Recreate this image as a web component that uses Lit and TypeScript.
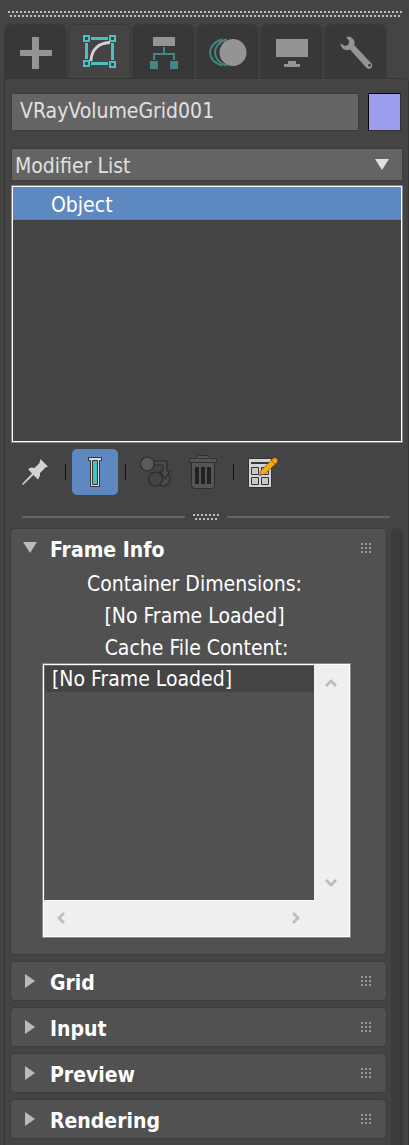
import { LitElement, html, css, svg } from "lit";
import { customElement, state } from "lit/decorators.js";
import { classMap } from "lit/directives/class-map.js";

const tabs = [
  {
    name: "Create",
    icon: svg`<path fill="#949494" d="M17 8h7v13h13v6H24v13h-7V27H5v-6h12z"/>`,
  },
  {
    name: "Modify",
    icon: svg`<path fill="#49c0c1" fill-rule="evenodd" d="M4 6h7v7H4zm2 2v3h3V8zM30 6h7v7h-7zm2 2v3h3V8zM4 31h7v7H4zm2 2v3h3v-3zM30 32h7v7h-7zm2 2v3h3v-3z
      M12 8h17v3H12zM12 33h17v3H12zM6 14h3v16H6zM32 14h3v17h-3z"/>
      <path fill="none" stroke="#d4d4d4" stroke-width="2.800" d="M12 32C12.500 21 19 14 31 13.500"/>`,
  },
  {
    name: "Hierarchy",
    icon: svg`<path fill="#949494" d="M10 8h22v9H10z"/><path fill="none" stroke="#438887" stroke-width="2" d="M21 18v7M11 31v-6h20v6"/>
      <path fill="#438887" d="M7 32h8v8H7zM27 32h8v8h-8z"/>`,
  },
  {
    name: "Motion",
    icon: svg`<g fill="none" stroke="#438887" stroke-width="1.800"><path d="M15.500 10.500C-1 14-1 33 15.500 36.500"/><path d="M20 10.500C4 14 4 33 20 36.500"/></g>
      <circle cx="26" cy="23.500" r="13.500" fill="#949494"/>`,
  },
  {
    name: "Display",
    icon: svg`<path fill="#949494" d="M5 10h32v18H5zM17 32h8v3h4v3H13v-3h4z"/>`,
  },
  {
    name: "Utilities",
    icon: svg`<path fill="#949494" fill-rule="evenodd" d="M11 8c4-1 8 1 8.500 5 .2 1 0 2-.3 3L35.500 33.500c1.500 1 2.200 2.500 1.500 4.300-1 2.500-4 2.800-5.700 1L15 20.500c-4 2-8.500-.5-9.500-5l.2-1 4 2.500 3.500-1 1-4zM34.500 34.800a1.400 1.400 0 1 0 .1 2.800 1.400 1.400 0 0 0-.1-2.800z"/>`,
  },
];

@customElement("app-root")
export class AppRoot extends LitElement {
  @state() private tab = 1;
  @state() private open: Record<string, boolean> = { "Frame Info": true };

  static styles = css`
    :host {
      display: flex;
      flex-direction: column;
      min-height: 100vh;
      box-sizing: border-box;
      padding: 11px 0 0 4px;
      background: #444;
      color: #fff;
      font: 21px/26px "DejaVu Sans Condensed", "DejaVu Sans", sans-serif;
    }
    * { box-sizing: border-box; }
    button, input, select {
      margin: 0;
      padding: 0;
      border: 0;
      background: none;
      color: inherit;
      font: inherit;
      border-radius: 0;
      appearance: none;
    }
    ul { list-style: none; margin: 0; padding: 0; }
    p, h2 { margin: 0; font: inherit; }
    svg { display: block; }
    .grip { width: calc(100% - 11px); height: 6px; margin-left: 4px; }
    .tabs { display: flex; gap: 1px; margin: 7px 22px -1px 0; }
    .tab {
      flex: 1;
      height: 55px;
      border: 1px solid #3c3c3c;
      border-bottom-color: #353535;
      border-radius: 7px 7px 0 0;
      background: #383838;
      display: flex;
      justify-content: center;
      padding-top: 4px;
    }
    .tab.active { background: #444; border-color: #383838; border-bottom-color: #444; }
    .panel {
      flex: 1;
      display: flex;
      flex-direction: column;
      border: 1px solid #363636;
      border-bottom: 0;
      border-radius: 0 5px 0 0;
      padding-top: 14px;
    }
    .top { display: flex; flex-direction: column; padding: 0 5px 0 6px; }
    .row { display: flex; gap: 9px; padding-right: 2px; }
    .name {
      flex: 1;
      min-width: 0;
      height: 38px;
      padding: 0 8px 2px;
      border: 1px solid #3b3b3b;
      background: #646464;
      color: #e0e0e0;
    }
    .swatch {
      width: 33px;
      height: 38px;
      border: 1px solid #333;
      border-top-color: #000;
      border-left-color: #000;
      background: #9d9df0;
    }
    .combo { display: grid; margin-top: 17px; }
    .combo > * { grid-area: 1 / 1; }
    .modifiers {
      height: 33px;
      padding: 2px 3px 0;
      border: 1px solid #3b3b3b;
      background: #646464;
      color: #e0e0e0;
    }
    .arrow { place-self: center end; margin-right: 14px; pointer-events: none; }
    .stack {
      height: 258px;
      margin-top: 4px;
      border: 1px solid #858590;
      outline: 1px solid #fff;
      outline-offset: -2px;
      padding: 1px;
    }
    .object {
      width: 100%;
      height: 33px;
      padding: 3px 38px 0;
      border-bottom: 1px solid #777;
      background: #5e89c0;
      text-align: left;
    }
    .tools { display: flex; align-items: center; gap: 2px; margin-top: 6px; padding-left: 1px; height: 46px; }
    .tool { display: grid; place-items: center; width: 46px; height: 46px; border-radius: 5px; }
    .tool.on { background: #5e89c0; }
    .bar { width: 1px; height: 16px; margin: 0 4px 0 5px; background: #111; }
    .splitter { display: flex; align-items: center; gap: 8px; margin: 19px 13px 8px 11px; }
    .rule { flex: 1; height: 2px; background: #646464; }
    .lower { flex: 1; display: flex; gap: 4px; padding: 0 5px; }
    .rollouts { flex: 1; display: flex; flex-direction: column; gap: 6px; }
    .scroll { width: 12px; border-radius: 6px 6px 0 0; background: #3b3b3b; }
    .rollout { border: 1px solid #3c3c3c; border-radius: 5px; background: #515151; }
    .head {
      display: flex;
      align-items: center;
      width: 100%;
      height: 38px;
      padding: 0 14px 0 12px;
      text-align: left;
      font-weight: bold;
    }
    .tri { margin-right: 12px; }
    .title { flex: 1; padding-top: 4px; }
    .body { padding: 0 35px 16px 31px; text-align: center; }
    .body p { padding-top: 2px; line-height: 30px; }
    .dims { padding-right: 4px; }
    .files {
      display: grid;
      grid-template-columns: 1fr 35px;
      grid-template-rows: 236px 35px;
      border: 1px solid #8a8a8a;
      outline: 1px solid #fff;
      outline-offset: -2px;
      padding: 1px;
      background: #efefef;
    }
    .list {
      background: #515151;
      border: 1px solid #666;
      border-right: 0;
      border-bottom-color: #fff;
      text-align: left;
    }
    .file { padding: 1px 0 0 7px; line-height: 25px; background: #444; white-space: nowrap; overflow: hidden; }
    .vbar, .hbar { display: flex; justify-content: space-between; align-items: center; }
    .vbar { flex-direction: column; padding: 9px 1px 9px 0; }
    .hbar { padding: 0 9px 2px 8px; }
    .step { display: grid; place-items: center; width: 18px; height: 18px; }
  `;

  private chevron(name: string, d: string) {
    return html`<button class="step" aria-label=${name}>
      <svg width="12" height="12"><path d=${d} fill="none" stroke="#bdbdbd" stroke-width="2.800"/></svg>
    </button>`;
  }

  private dots() {
    return svg`<pattern id="d" width="4" height="8" patternUnits="userSpaceOnUse">
      <path fill="#bebebe" d="M0 0h2v2H0zM2 4h2v2H2z"/></pattern>`;
  }

  private rollout(title: string, body: unknown = "") {
    const open = !!this.open[title];
    return html`<section class="rollout">
      <h2><button class="head" aria-expanded=${open}
        @click=${() => (this.open = { ...this.open, [title]: !open })}>
        <svg class="tri" width="15" height="14"><path fill="#bbb" d=${open ? "M0 1h14L7 12z" : "M2 0v14l10-7z"}/></svg>
        <span class="title">${title}</span>
        <svg width="12" height="10"><path stroke="#999" stroke-width="2" stroke-dasharray="2 2" d="M1 1h10M1 5h10M1 9h10"/></svg>
      </button></h2>
      ${open ? body : ""}
    </section>`;
  }

  render() {
    return html`
      <svg class="grip" aria-hidden="true"><defs>${this.dots()}</defs><rect width="100%" height="6" fill="url(#d)"/></svg>
      <nav class="tabs">
        ${tabs.map((t, i) => html`<button aria-label=${t.name}
          class=${classMap({ tab: true, active: i === this.tab })}
          @click=${() => (this.tab = i)}><svg width="41" height="46">${t.icon}</svg></button>`)}
      </nav>
      <main class="panel">
        <div class="top">
          <div class="row">
            <input class="name" aria-label="Object name" value="VRayVolumeGrid001" spellcheck="false">
            <button class="swatch" aria-label="Object color"></button>
          </div>
          <div class="combo">
            <select class="modifiers" aria-label="Modifiers"><option>Modifier List</option></select>
            <svg class="arrow" width="14" height="12"><path fill="#e0e0e0" d="M0 0h14L7 11z"/></svg>
          </div>
          <ul class="stack"><li><button class="object">Object</button></li></ul>
          <div class="tools">
            <button class="tool" aria-label="Pin stack">
              <svg width="28" height="28"><path fill="#d2d2d2" d="M19.500 1l7.500 7.500-2.500 1L19 15v2.500L17 21.500l-4.500-4.500L2 27l-1-1L11 15.500 7 11l3.500-1.500 3 .5L18.500 5z"/></svg>
            </button>
            <span class="bar"></span>
            <button class="tool on" aria-label="Show end result">
              <svg width="14" height="32"><path fill="#ddd" stroke="#333" d="M.500 1.500h13v3h-2v26h-9v-26h-2z"/><path fill="#49bfc0" stroke="#333" d="M4.500 4.500h5v24h-5z"/></svg>
            </button>
            <span class="bar"></span>
            <button class="tool" aria-label="Make unique">
              <svg width="32" height="32"><g stroke="#2b2b2b" stroke-width="1.200"><circle cx="24" cy="23" r="7" fill="#4b4b4b"/><circle cx="8.500" cy="8" r="7" fill="#5b5b5b"/>
                <path fill="#4b4b4b" d="M15 5h13v10h3l-5 8-5-8h3v-6h-9z"/><circle cx="16.500" cy="23" r="7" fill="#444"/></g></svg>
            </button>
            <button class="tool" aria-label="Remove modifier">
              <svg width="30" height="36"><path fill="#555" stroke="#2d2d2d" d="M3.500 8.500v23q0 3 3 3h17q3 0 3-3v-23M1.500 8.500v-3q0-1 2-1h5l2-3h9l2 3h5q2 0 2 1v3z"/>
                <path fill="#222" d="M7 13h4v17H7zM13 13h4v17h-4zM19 13h4v17h-4z"/><path stroke="#333" fill="none" d="M10 4.500h10"/></svg>
            </button>
            <span class="bar"></span>
            <button class="tool" aria-label="Configure modifier sets">
              <svg width="30" height="32"><path fill="#d4d4d4" stroke="#333" d="M.500 2.500h23v29H.500z"/><path stroke="#383838" stroke-width="2" d="M3 7h20"/>
                <path fill="#c8c8c8" stroke="#333" d="M3.500 11.500h7v7h-7zM13.500 11.500h7v7h-7zM3.500 21.500h7v7h-7zM13.500 21.500h7v7h-7z"/>
                <path fill="#fdaa09" stroke="#444" stroke-width=".600" d="M11.500 19.500l1.500-5L25 2.500c2-2 6 1 4 4L17 18z"/><path stroke="#7b622c" d="M23 4l4.500 4.500"/><path fill="#887755" d="M11 20l1-3 2 2z"/></svg>
            </button>
          </div>
          <div class="splitter">
            <span class="rule"></span>
            <svg width="26" height="6" aria-hidden="true"><defs>${this.dots()}</defs><rect width="26" height="6" fill="url(#d)"/></svg>
            <span class="rule"></span>
          </div>
        </div>
        <div class="lower">
          <div class="rollouts">
            ${this.rollout("Frame Info", html`<div class="body">
              <div class="dims"><p>Container Dimensions:</p><p>[No Frame Loaded]</p></div>
              <p>Cache File Content:</p>
              <div class="files">
                <ul class="list"><li class="file">[No Frame Loaded]</li></ul>
                <div class="vbar">${this.chevron("Scroll up", "M1 9l5-5 5 5")}${this.chevron("Scroll down", "M1 3l5 5 5-5")}</div>
                <div class="hbar">${this.chevron("Scroll left", "M9 1L4 6l5 5")}${this.chevron("Scroll right", "M3 1l5 5-5 5")}</div>
              </div>
            </div>`)}
            ${["Grid", "Input", "Preview", "Rendering"].map((t) => this.rollout(t))}
          </div>
          <div class="scroll"></div>
        </div>
      </main>`;
  }
}
